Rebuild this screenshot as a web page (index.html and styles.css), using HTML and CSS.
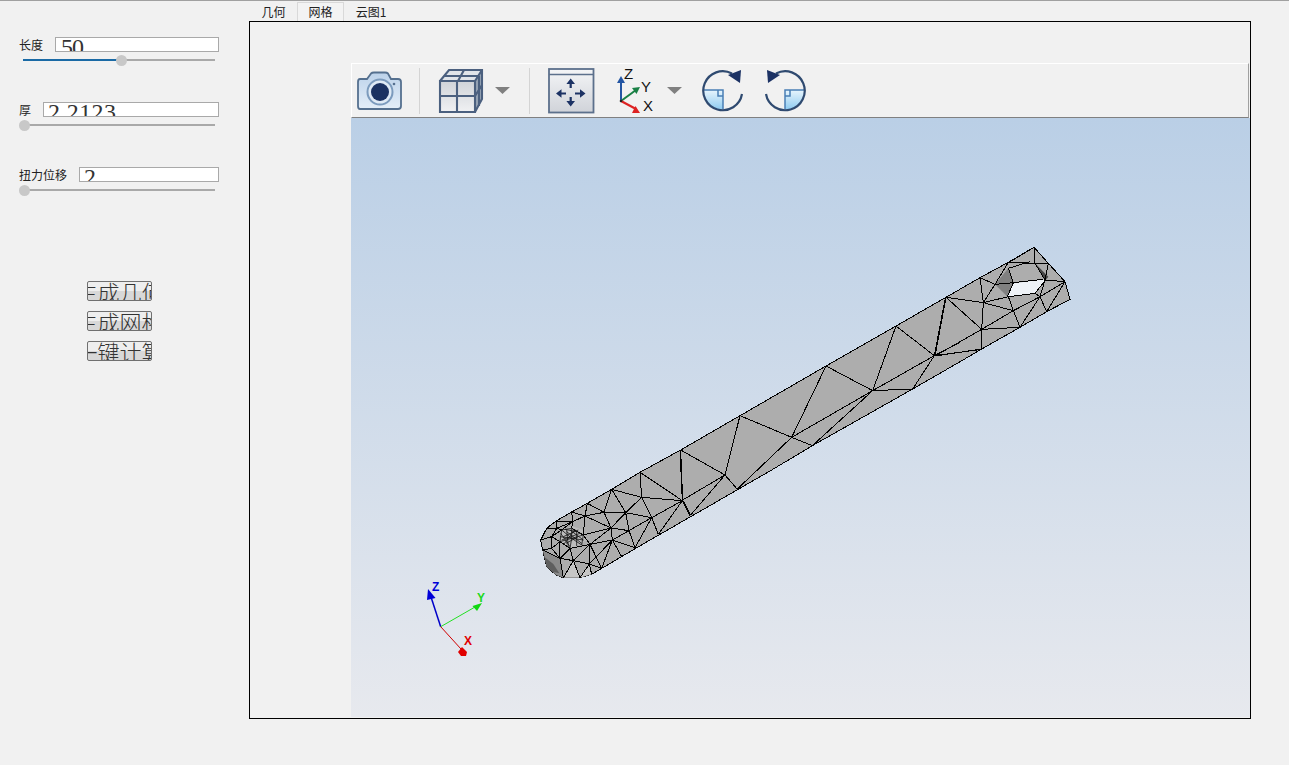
FILE: index.html
```html
<!DOCTYPE html>
<html lang="zh">
<head>
<meta charset="utf-8">
<title>网格</title>
<link rel="stylesheet" href="styles.css">
</head>
<body>
<div class="app">
  <aside class="side">
    <div class="field">
      <div class="row"><span class="label">长度</span><div class="input"><span class="value val-a">50</span></div></div>
      <div class="slider"><div class="fill" style="width:98px"></div><div class="thumb" style="left:98px"></div></div>
    </div>
    <div class="field">
      <div class="row"><span class="label">厚</span><div class="input"><span class="value">2.2123</span></div></div>
      <div class="slider"><div class="thumb" style="left:1px"></div></div>
    </div>
    <div class="field">
      <div class="row"><span class="label">扭力位移</span><div class="input"><span class="value">2</span></div></div>
      <div class="slider"><div class="thumb" style="left:1px"></div></div>
    </div>
    <div class="buttons">
      <button class="btn"><span>生成几何</span></button>
      <button class="btn"><span>生成网格</span></button>
      <button class="btn"><span>一键计算</span></button>
    </div>
  </aside>
  <main class="main">
    <nav class="tabs">
      <div class="tab">几何</div>
      <div class="tab tab-on">网格</div>
      <div class="tab">云图1</div>
    </nav>
    <section class="frame">
      <div class="toolbar">
        <svg class="ico ico-cam" width="46" height="40" viewBox="357 70 46 40">
          <defs>
            <linearGradient id="camg" x1="0" y1="0" x2="0" y2="1"><stop offset="0" stop-color="#bcd2ea"/><stop offset="1" stop-color="#e4eef8"/></linearGradient>
            <linearGradient id="fitg" x1="0" y1="0" x2="0" y2="1"><stop offset="0" stop-color="#f4f5f7"/><stop offset="1" stop-color="#d0d3d9"/></linearGradient>
            <linearGradient id="cubeg" x1="0" y1="0" x2="0" y2="1"><stop offset="0" stop-color="#cfd3d8"/><stop offset="1" stop-color="#f0f1f3"/></linearGradient>
            <linearGradient id="quadg" x1="0" y1="0" x2="0" y2="1"><stop offset="0" stop-color="#e8f5fd"/><stop offset="1" stop-color="#8fcbf0"/></linearGradient>
          </defs>
          <path d="M360 78h7l4-5.500q1-1 3-1h11q2 0 3 1l3 5.500h7q3 0 3 3v24q0 3-3 3h-38q-2 0-2-3v-24q0-3 2-3z" fill="url(#camg)" stroke="#55708f" stroke-width="1.800"/>
          <circle cx="380" cy="91" r="12.500" fill="#dfeaf5" stroke="#7c9bbd" stroke-width="2"/>
          <circle cx="380" cy="91" r="9" fill="#1b3262"/>
          <circle cx="394" cy="83" r="1.300" fill="#55708f"/>
        </svg>
        <div class="sep sep-a"></div>
        <svg class="ico ico-cube" width="46" height="46" viewBox="438 67 46 46">
          <path d="M440 80h35v31h-35z" fill="url(#cubeg)"/>
          <path d="M440 80l9-11h33l-7 11z" fill="#e0e4e9"/>
          <path d="M475 80l7-11v29l-7 13z" fill="#98a5b6"/>
          <path d="M440 80h35v31h-35zM440 80l9-11h33v29l-7 13M475 80l7-11M457 80v31M440 95h35M475 95l7-11M458 80l6-11M444 75h34M479 75v30" fill="none" stroke="#4b607f" stroke-width="2.100"/>
        </svg>
        <svg class="ico ico-drop" width="15" height="8" viewBox="0 0 15 8"><path d="M0 0h15l-7.500 7z" fill="#808080"/></svg>
        <div class="sep sep-b"></div>
        <svg class="ico ico-fit" width="47" height="46" viewBox="548 67 47 46">
          <rect x="549" y="68" width="44.500" height="43.500" fill="url(#fitg)" stroke="#5c708c" stroke-width="1.800"/>
          <path d="M549 73.500h44.500" stroke="#5c708c" stroke-width="1.500"/>
          <path d="M570.700 82v5M570.700 96v5M561 92.500h5M575 92.500h5.500" stroke="#1c3264" stroke-width="2.200"/>
          <path d="M570.700 77.500l4.300 5.500h-8.600zM570.700 105.500l4.300-5.500h-8.600zM556 92.500l5.500-4.300v8.600zM585.500 92.500l-5.500-4.300v8.600z" fill="#1c3264"/>
        </svg>
        <svg class="ico ico-axes" width="36" height="46" viewBox="617 67 36 46">
          <path d="M621 100v-20" stroke="#2355a3" stroke-width="2" fill="none"/>
          <path d="M621 75l4 7h-8z" fill="#2355a3"/>
          <path d="M621 100l15-11" stroke="#1a8045" stroke-width="2" fill="none"/>
          <path d="M640 86l-3.500 7-4.500-6z" fill="#1a8045"/>
          <path d="M621 100l15 8" stroke="#dd2222" stroke-width="2" fill="none"/>
          <path d="M640 112l-8 0 3.500-7z" fill="#dd2222"/>
          <circle cx="621" cy="100" r="1.300" fill="#222"/>
          <text class="axtxt" x="624" y="78">Z</text>
          <text class="axtxt" x="641" y="91">Y</text>
          <text class="axtxt" x="643" y="110">X</text>
        </svg>
        <svg class="ico ico-drop2" width="15" height="8" viewBox="0 0 15 8"><path d="M0 0h15l-7.500 7z" fill="#808080"/></svg>
        <svg class="ico ico-rot" width="44" height="44" viewBox="0 0 44 44">
          <path d="M2 22h20v19.500a19.500 19.500 0 0 1-20-19.500z" fill="url(#quadg)"/>
          <path d="M2 22h20v19.500M17 22v6h5" fill="none" stroke="#4a7fb5" stroke-width="1.500"/>
          <path d="M31 5.500A19.500 19.500 0 1 0 41 26" fill="none" stroke="#2f4a70" stroke-width="2.200"/>
          <path d="M27 7l13-5-1 13z" fill="#1c3264"/>
        </svg>
        <svg class="ico ico-rot2" width="44" height="44" viewBox="0 0 44 44">
          <g transform="translate(44 0) scale(-1 1)">
            <path d="M2 22h20v19.500a19.500 19.500 0 0 1-20-19.500z" fill="url(#quadg)"/>
            <path d="M2 22h20v19.500M17 22v6h5" fill="none" stroke="#4a7fb5" stroke-width="1.500"/>
            <path d="M31 5.500A19.500 19.500 0 1 0 41 26" fill="none" stroke="#2f4a70" stroke-width="2.200"/>
            <path d="M27 7l13-5-1 13z" fill="#1c3264"/>
          </g>
        </svg>
      </div>
      <div class="viewport">
        <svg class="scene" width="899" height="599" viewBox="351 118 899 599">
          <polygon class="solid" points="1034,247.300 1008.300,262.300 980,277.700 946,297.300 896,326 826,366 740,415.700 680.700,450 640,472.300 611.700,489.300 587.300,503.300 571.700,512 556,521 546.700,528.300 540.700,540 542.700,550 546.700,566.700 556,575 563.300,577.700 580,577.700 591.700,574.300 635,548.700 771.700,470 812.300,445.700 912.700,389 963,360 981.700,349 1020,327.300 1046.700,311.700 1070,299.300 1065,281.700 1048.300,263.300"/>

          <!-- far end of the bar -->
          <g transform="translate(930 240) scale(.33333)">
            <polygon class="hole" points="250,130 340,118 345,122 315,160 235,170 215,152"/>
            <polygon class="facet-mid" points="235,85 250,128 232,170 195,133"/>
            <polygon class="facet-dark" points="315,70 355,110 345,122"/>
            <path class="wire" d="M48 172L160 188L250 212M48 172L155 268M48 172L15 348M160 188L155 268M155 268L250 212M250 212L270 262M155 268L270 262M155 268L155 327M155 268L15 348M15 348L155 327M150 113L160 188M150 113L195 133M195 133L160 188M195 133L235 67M235 85L300 65M235 85L250 128L340 118M195 133L250 128M312 22L315 70M312 22L240 65M235 67L315 70M315 70L355 70M315 70L345 120M355 70L345 120M355 70L405 125M345 120L405 125M405 125L330 170M330 170L350 215M405 125L350 215M330 170L270 262M250 212L330 170M160 188L235 170M235 170L315 160M235 170L250 212M315 160L330 170M345 122L315 160M345 120L330 170M250 128L232 170"/>
          </g>

          <!-- long middle part -->
          <g transform="translate(700 300) scale(.33333)">
            <path class="wire" d="M120 347L275 412M120 347L75 525M378 198L275 412M378 198L518 272M588 78L518 272M588 78L703 167M735 0L703 167M275 412L337 437M518 272L638 267M703 167L638 267M703 167L846 148M703 167L780 127M518 272L703 167M275 412L518 272M337 437L518 272M275 412L112 567"/>
          </g>

          <!-- joint between the middle part and the near end -->
          <g transform="translate(660 430) scale(.33333)">
            <path class="wire" d="M62 60L195 135M62 60L68 210M195 135L68 210M195 135L92 255M195 135L232 178M68 210L92 255"/>
          </g>

          <!-- near end of the bar, coordinates from the near-end crop -->
          <g transform="translate(530 440) scale(.33333)">
            <polygon class="facet-low" points="38,330 90,355 100,413 78,405 50,380"/>
            <polygon class="facet-dark2" points="44,352 70,372 88,400 66,395 50,378"/>
            <polygon class="facet-light" points="100,413 130,362 150,413"/>
            <polygon class="facet-light" points="150,413 178,372 185,403"/>
            <polygon class="center-light" points="90,275 125,258 160,270 170,300 130,325 95,312"/>
            <path class="wire" d="M450 30L457 182M330 97L335 172M330 97L457 182M335 172L457 182M335 172L245 148M245 148L287 218M287 218L335 172M287 218L365 233M335 172L365 233M365 233L457 182M457 182L385 283M365 233L385 283M457 182L480 228M365 233L315 323M287 218L243 264M287 218L297 272M243 264L297 272M297 272L365 233M297 272L247 300M297 272L315 323M247 300L315 323M247 300L275 350M243 264L247 300M247 300L215 385M222 217L245 148M222 217L287 218M222 217L243 264M172 190L222 217M172 190L165 228M125 216L128 245M125 216L172 190M125 216L165 228M128 245L165 228M165 228L222 217M165 228L243 264M78 243L128 245M78 243L80 265M50 265L80 265M32 300L65 290M38 330L65 325M38 330L90 355M65 290L80 265M65 290L65 325M65 325L90 355M90 355L130 362M130 362L178 372M90 355L100 413M130 362L100 413M130 362L150 413M178 372L150 413M178 372L185 403M178 372L215 385M178 372L247 300M178 372L180 313M130 362L180 313M130 362L120 325M90 355L120 325M90 355L90 305M180 313L247 300M180 313L243 264M180 313L160 285M160 285L243 264M160 285L165 228M160 285L125 265M128 245L125 265M128 245L95 270M80 265L95 270M80 265L128 245M65 290L95 270M65 290L90 305M65 325L90 305M90 305L120 325M120 325L180 313"/>
            <path class="fine" d="M95 270L125 265M125 265L160 285M95 270L90 305M95 270L125 295M125 265L125 295M160 285L125 295M90 305L125 295M120 325L125 295M160 285L155 315M125 295L155 315M105 268L140 275M100 290L145 270M108 310L145 290M110 268L115 322M140 272L140 318M90 290L160 300M92 280L120 320M110 275L155 310M100 315L135 268M120 270L160 300M95 300L150 280"/>
            <path class="wire" d="M180 313L215 385"/>
          </g>

          <!-- world triad -->
          <g class="triad">
            <path class="ax-z" d="M440.700 626.700L431 597"/>
            <path class="ax-y" d="M440.700 626.700L475 607"/>
            <path class="ax-x" d="M440.700 626.700L461 649"/>
            <path class="tip-z" d="M428 589l7.500 9-8.500 2z"/>
            <path class="tip-y" d="M482 603l-5 8-4.500-5z"/>
            <path class="tip-x" d="M462 647l5 5-1 4h-5l-3-4z"/>
            <text class="tx tx-z" x="432" y="591">Z</text>
            <text class="tx tx-y" x="477" y="602">Y</text>
            <text class="tx tx-x" x="464" y="645">X</text>
          </g>
        </svg>
      </div>
    </section>
  </main>
</div>
</body>
</html>
```
FILE: styles.css
```css
* { box-sizing: border-box; }
html, body { margin: 0; padding: 0; }
body {
  width: 1289px;
  height: 765px;
  overflow: hidden;
  background: #f1f1f1;
  border-top: 1px solid #a0a0a0;
  font-family: "Noto Sans CJK SC", "Liberation Sans", sans-serif;
  color: #222;
}
.app { display: flex; }

/* left column */
.side { width: 249px; padding: 36px 30px 0 19px; flex: none; }
.field { height: 65px; }
.row { display: flex; align-items: center; gap: 12px; height: 15px; }
.label { font-size: 12px; line-height: 15px; white-space: nowrap; flex: none; }
.input {
  flex: 1;
  height: 15px;
  background: #fff;
  border: 1px solid #a9a9a9;
  padding-left: 4px;
  overflow: hidden;
}
.value {
  display: block;
  font: 24px/18px "Liberation Serif", serif;
  letter-spacing: .4px;
  color: #333;
}
.val-a { padding-left: 1px; letter-spacing: -1px; }
.slider {
  position: relative;
  width: 192px;
  height: 2px;
  margin: 7px 0 0 4px;
  background: #a9a9a9;
}
.fill { height: 2px; background: #1a6aa5; }
.thumb {
  position: absolute;
  top: -4px;
  width: 11px;
  height: 11px;
  margin-left: -5px;
  border-radius: 50%;
  background: #c8c8c8;
}
.buttons {
  display: flex;
  flex-direction: column;
  align-items: flex-start;
  gap: 10px;
  margin: 49px 0 0 68px;
}
.btn {
  display: flex;
  justify-content: center;
  align-items: center;
  width: 65px;
  height: 20px;
  padding: 0;
  overflow: hidden;
  border: 1px solid #707070;
  border-radius: 2px;
  background: linear-gradient(#eeeeee 0, #eeeeee 50%, #d8d8d8 50%, #d8d8d8 100%);
  font: 300 22px/18px "Noto Sans CJK SC", sans-serif;
  color: #333;
}
.btn span { flex: none; white-space: nowrap; }

/* tabs and frame */
.main { width: 1002px; flex: none; }
.tabs { display: flex; height: 20px; padding: 1px 0 0 1px; }
.tab {
  width: 47px;
  font-size: 12px;
  line-height: 19px;
  text-align: center;
  white-space: nowrap;
}
.tab-on {
  background: #f3f3f3;
  border: 1px solid #d9d9d9;
  border-bottom: 0;
  line-height: 18px;
}
.tab:last-child { width: 54px; }
.frame {
  height: 698px;
  border: 1px solid #000;
  padding: 41px 0 1px 101px;
  display: flex;
  flex-direction: column;
}
.toolbar {
  display: flex;
  align-items: center;
  height: 55px;
  flex: none;
  padding-left: 5px;
  border-top: 1px solid #fff;
  border-left: 1px solid #fff;
  border-right: 1px solid #a0a0a0;
  border-bottom: 1px solid #808080;
  margin-right: 1px;
}
.ico { display: block; flex: none; }
.sep { width: 1px; height: 46px; background: #d4d4d4; flex: none; }
.sep-a { margin-left: 16px; }
.ico-cube { margin-left: 18px; }
.ico-drop { margin-left: 11px; margin-top: 1px; }
.sep-b { margin-left: 19px; }
.ico-fit { margin-left: 18px; }
.ico-axes { margin-left: 22px; }
.ico-drop2 { margin-left: 14px; margin-top: 1px; }
.ico-rot { margin-left: 19px; margin-top: -1px; }
.ico-rot2 { margin-left: 18px; margin-top: -1px; }
.axtxt { font: 15px "Liberation Sans", sans-serif; fill: #111; }

.viewport {
  flex: 1;
  background: linear-gradient(#bacfe6, #e7e9ee);
}
.scene { display: block; }
.solid { fill: #adadad; stroke: #000; stroke-width: 1; shape-rendering: crispEdges; }
.wire {
  fill: none;
  stroke: #000;
  stroke-width: 1;
  vector-effect: non-scaling-stroke;
  shape-rendering: crispEdges;
}
.fine {
  fill: none;
  stroke: #111;
  stroke-width: .8;
  vector-effect: non-scaling-stroke;
}
.hole { fill: #eef2f7; }
.facet-mid { fill: #808080; }
.facet-dark { fill: #454545; }
.facet-low { fill: #8a8a8a; }
.facet-dark2 { fill: #5e5e5e; }
.facet-light { fill: #c6c6c6; }
.center-light { fill: #bcbcbc; }

.triad path { fill: none; stroke-width: 1; }
.ax-z { stroke: #0000c8; stroke-width: 1.500 !important; }
.ax-y { stroke: #22e022; }
.ax-x { stroke: #d00000; }
.triad .tip-z { fill: #0000d8; }
.triad .tip-y { fill: #10d810; }
.triad .tip-x { fill: #e00000; }
.tx { font: bold 12px "Liberation Sans", sans-serif; }
.tx-z { fill: #0000d8; }
.tx-y { fill: #20d820; }
.tx-x { fill: #e00000; }
```
